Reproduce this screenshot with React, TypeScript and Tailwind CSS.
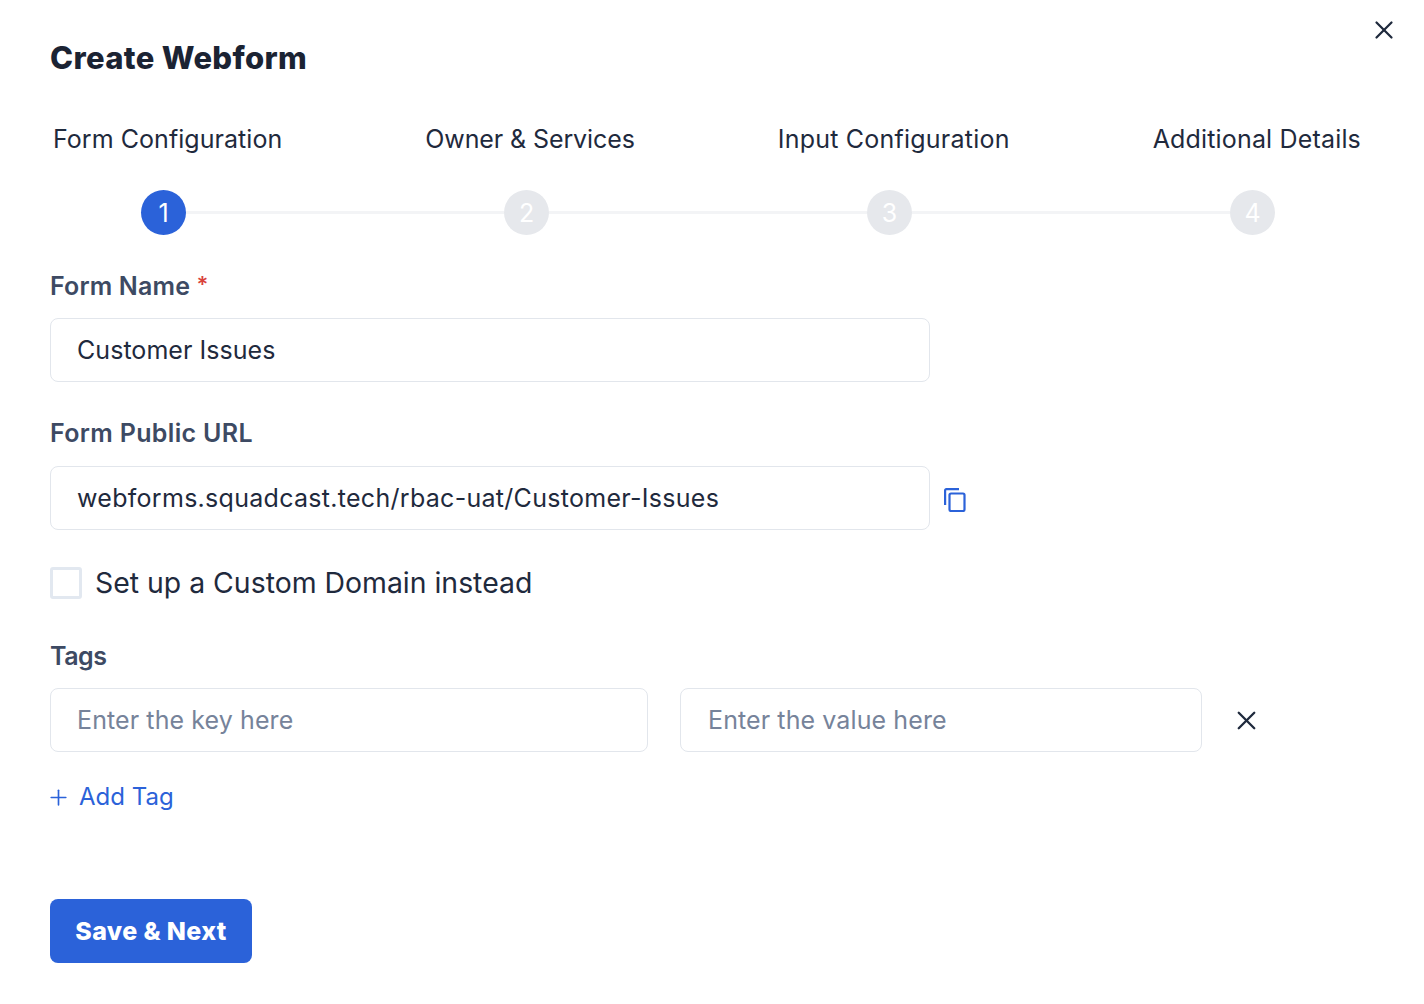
import { Plus, X } from 'lucide-react';

const steps = [
  { label: 'Form Configuration', cls: 'tracking-[0.05px]' },
  { label: 'Owner & Services', cls: 'tracking-[-0.1px]' },
  { label: 'Input Configuration', cls: 'tracking-[0.22px]' },
  { label: 'Additional Details', cls: 'tracking-[0.17px]' },
];

const Stepper = () => (
  <div>
    <div className="mt-[42px] ml-[3px] mr-[13px] flex justify-between text-[25px] leading-[34px] text-[#1f2a3d]">
      {steps.map((s) => (
        <span key={s.label} className={s.cls}>
          {s.label}
        </span>
      ))}
    </div>
    <div className="mt-[34px] ml-[91px] mr-[99px] flex items-center">
      {[1, 2, 3, 4].map((n) => (
        <div key={n} className={`flex items-center ${n < 4 ? 'flex-1' : ''}`}>
          <div
            className={`w-[45px] h-[45px] shrink-0 rounded-full flex items-center justify-center pt-[2px] text-[25px] text-white ${
              n === 1 ? 'bg-[#2b62d9]' : 'bg-[#e6e8ec]'
            }`}
          >
            {n}
          </div>
          {n < 4 && <div className="flex-1 h-[3px] bg-[#f3f4f6]" />}
        </div>
      ))}
    </div>
  </div>
);

const Label = ({ children, className = '' }: { children: React.ReactNode; className?: string }) => (
  <div className={`text-[25px] leading-[34px] font-semibold text-[#3d4a63] ${className}`}>{children}</div>
);

const Field = ({ value, muted, className }: { value: string; muted?: boolean; className: string }) => (
  <div
    className={`h-[64px] shrink-0 border border-[#e2e6ec] rounded-lg flex items-center pl-[26px] pt-[2px] text-[25px] ${
      muted ? 'text-[#76839a]' : 'text-[#1f2a3d]'
    } ${className}`}
  >
    {value}
  </div>
);

export default function App() {
  return (
    <div className="w-[1424px] h-[1004px] bg-white relative font-['Inter',sans-serif] text-[#1f2a3d] overflow-hidden">
      <X className="absolute top-[15px] left-[1369px] w-[30px] h-[30px]" strokeWidth={1.8} />
      <div className="pt-[36px] pl-[50px] pr-[50px]">
        <h1 className="text-[31px] leading-[44px] font-extrabold text-[#1b2333] tracking-[0.35px]">Create Webform</h1>
        <Stepper />

        <Label className="mt-[34px] tracking-[0.15px]">
          Form Name <span className="relative -top-[3px] text-[#d9423c] text-[22px]">*</span>
        </Label>
        <Field value="Customer Issues" className="w-[880px] mt-[14px] tracking-[0.05px]" />

        <Label className="mt-[34px] tracking-[0.33px]">Form Public URL</Label>
        <div className="mt-[16px] flex items-center">
          <Field value="webforms.squadcast.tech/rbac-uat/Customer-Issues" className="w-[880px] tracking-[0.29px]" />
          <svg className="ml-[14px] mt-[4px]" width="22" height="24" viewBox="0 0 22 24" fill="none" stroke="#2b62d9" strokeWidth="2.2">
            <path d="M1.1 17V2.4C1.1 1.6 1.6 1.1 2.4 1.1H15" />
            <rect x="5.5" y="5.5" width="15" height="17.5" rx="1.5" />
          </svg>
        </div>

        <div className="mt-[37px] flex items-center">
          <div className="w-[32px] h-[32px] border-[3px] border-[#e2e8f0] rounded-[3px]" />
          <span className="ml-[13px] text-[28.4px] leading-[32px]">Set up a Custom Domain instead</span>
        </div>

        <Label className="mt-[40px] tracking-[-0.5px]">Tags</Label>
        <div className="mt-[15px] flex items-center">
          <Field value="Enter the key here" muted className="w-[598px] tracking-[0.1px]" />
          <Field value="Enter the value here" muted className="w-[522px] ml-[32px] pl-[27px] tracking-[0.1px]" />
          <X className="ml-[29px] w-[31px] h-[31px]" strokeWidth={1.8} />
        </div>

        <div className="mt-[27px] flex items-center text-[#2b62d9] text-[24px] leading-[36px]">
          <Plus className="w-[25px] h-[25px] -ml-[4px]" strokeWidth={1.6} />
          <span className="ml-[8px]">Add Tag</span>
        </div>

        <button className="mt-[84px] w-[202px] h-[64px] rounded-lg bg-[#2b62d9] pt-[2px] text-white text-[25px] font-extrabold tracking-[0.4px] flex items-center justify-center">
          Save &amp; Next
        </button>
      </div>
    </div>
  );
}
